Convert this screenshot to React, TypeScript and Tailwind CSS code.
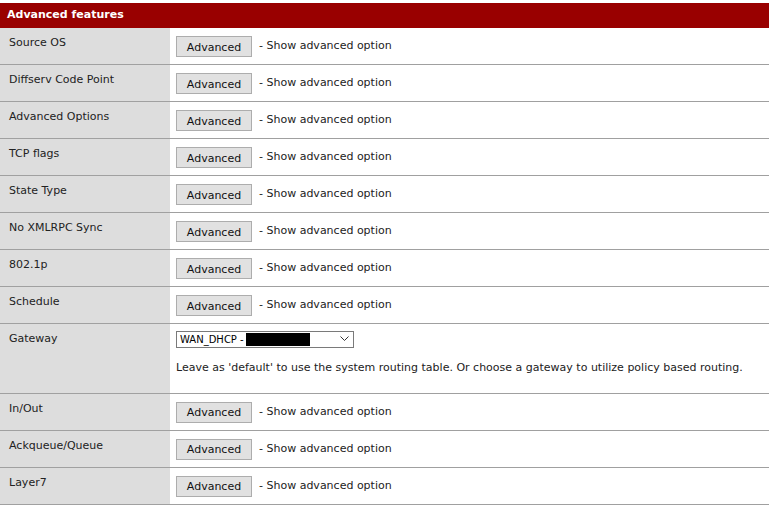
import React from "react";

const rows = [
  "Source OS",
  "Diffserv Code Point",
  "Advanced Options",
  "TCP flags",
  "State Type",
  "No XMLRPC Sync",
  "802.1p",
  "Schedule",
];
const rows2 = ["In/Out", "Ackqueue/Queue", "Layer7"];

function Row({ label, children }: { label: string; children: React.ReactNode }) {
  return (
    <div className="flex border-b border-[#a0a0a0]">
      <div className="w-[170px] shrink-0 bg-[#dddddd] pl-[9px] pt-[7px] text-[#222]">{label}</div>
      <div className="flex-1 bg-white pl-[6px] pt-[8px] pb-[7px]">{children}</div>
    </div>
  );
}

function AdvRow({ label }: { label: string }) {
  return (
    <Row label={label}>
      <div className="flex items-center h-[21px]">
        <button className="h-[21px] w-[76px] border border-[#adadad] bg-[#e1e1e1] text-[#111] leading-none pt-[1px]">
          Advanced
        </button>
        <span className="ml-[7px] text-[#222]">- Show advanced option</span>
      </div>
    </Row>
  );
}

export default function App() {
  return (
    <div
      className="w-[769px] h-[507px] bg-white pt-[3px] text-[11px]"
      style={{ fontFamily: '"DejaVu Sans", Verdana, sans-serif' }}
    >
      <div className="h-[25px] bg-[#990000] text-white font-bold pl-[7px] flex items-center">
        Advanced features
      </div>
      {rows.map((r) => (
        <AdvRow key={r} label={r} />
      ))}
      <div className="flex border-b border-[#a0a0a0]">
        <div className="w-[170px] shrink-0 bg-[#dddddd] pl-[9px] pt-[7px] text-[#222]">Gateway</div>
        <div className="flex-1 bg-white pl-[6px] pt-[7px] pb-[16px]">
          <div className="relative flex items-center h-[17px] w-[178px] border border-[#7a7a7a] bg-white pl-[3px] text-[10px] text-black">
            <span>WAN_DHCP -</span>
            <span className="ml-[2px] inline-block h-[13px] w-[64px] bg-black" />
            <svg className="absolute right-[4px] top-[4px]" width="9" height="6" viewBox="0 0 9 6">
              <path d="M0.5 0.5 L4.5 4.5 L8.5 0.5" fill="none" stroke="#333" strokeWidth="1" />
            </svg>
          </div>
          <div className="mt-[12px] text-[#222]">
            Leave as 'default' to use the system routing table. Or choose a gateway to utilize policy based routing.
          </div>
        </div>
      </div>
      {rows2.map((r) => (
        <AdvRow key={r} label={r} />
      ))}
    </div>
  );
}
